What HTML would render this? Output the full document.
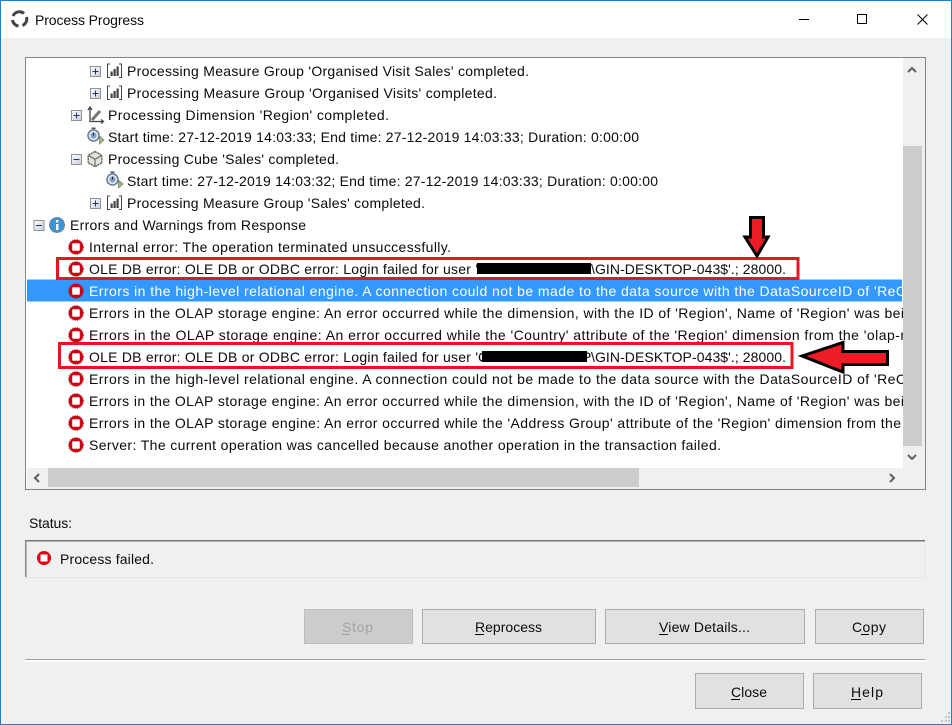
<!DOCTYPE html>
<html><head><meta charset="utf-8"><title>Process Progress</title>
<style>
html,body{margin:0;padding:0;width:952px;height:725px;overflow:hidden;background:#f0f0f0}
svg{display:block}
text{font-family:"Liberation Sans",sans-serif;font-size:14px;fill:#0a0a0a}
.s{fill:#fff}
.d{fill:#a3a3a3}
</style></head><body>
<svg width="952" height="725" viewBox="0 0 952 725" xmlns="http://www.w3.org/2000/svg">
<defs>
<clipPath id="lc"><rect x="27" y="58" width="876" height="410"/></clipPath>
<linearGradient id="bx" x1="0" y1="0" x2="1" y2="1"><stop offset="0" stop-color="#fff"/><stop offset="1" stop-color="#c9cdd6"/></linearGradient>
<g id="plus"><rect x=".5" y=".5" width="10" height="10" fill="url(#bx)" stroke="#8f9296"/><path d="M2.5 5.5h6M5.5 2.500v6" stroke="#25357a" stroke-width="1" fill="none"/></g>
<g id="minus"><rect x=".5" y=".5" width="10" height="10" fill="url(#bx)" stroke="#8f9296"/><path d="M2.500 5.500h6" stroke="#25357a" stroke-width="1" fill="none"/></g>
<g id="bars"><path d="M3 .5H.5V14H3M12 .5H14.500V14H12" fill="none" stroke="#444" stroke-width="1"/><rect x="3.500" y="8" width="2.200" height="4.500" fill="#444"/><rect x="6.500" y="5.500" width="2.200" height="7" fill="#444"/><rect x="9.500" y="3" width="2.200" height="9.500" fill="#444"/></g>
<g id="err"><circle cx="0" cy="0" r="7.800" fill="none" stroke="#555" stroke-width=".7" stroke-dasharray="1 1.500"/><circle cx="0" cy="0" r="7.300" fill="#cc0011"/><rect x="-3.800" y="-3.800" width="7.600" height="7.600" rx="1" fill="#fff"/></g>
<g id="watch"><circle cx="6.500" cy="8.500" r="5.600" fill="#dbe6f3" stroke="#5b6b80" stroke-width="1.300"/><circle cx="6.500" cy="8.500" r="3" fill="#7fa3d0"/><path d="M6.500 8.500V5.500" stroke="#223" stroke-width="1"/><rect x="4.500" y="0.500" width="4" height="1.600" fill="#555"/><path d="M12.500 9l4.500 4-4.500 4z" fill="#9db58a" stroke="#6c7f60" stroke-width=".7"/></g>
</defs>

<!-- window -->
<rect x="0" y="0" width="952" height="725" fill="#1b80d0"/>
<rect x="1" y="1" width="950" height="723" fill="#f0f0f0"/>
<rect x="1" y="1" width="950" height="37" fill="#fff"/>

<!-- title -->
<g fill="none" stroke="#444" stroke-width="3">
<path d="M13 16A7 7 0 0 1 24 13.500"/>
<path d="M26.500 17A7 7 0 0 1 22.500 25.500"/>
<path d="M18.500 26A7 7 0 0 1 12.500 20"/>
</g>
<text x="35" y="25" textLength="109" lengthAdjust="spacing">Process Progress</text>
<rect x="799" y="19" width="10" height="1" fill="#000"/>
<rect x="857.500" y="14.500" width="9" height="9" fill="none" stroke="#000"/>
<path d="M917.500 14.500l10 10M927.500 14.500l-10 10" stroke="#000" fill="none"/>

<!-- list box -->
<rect x="25.500" y="57.500" width="900" height="432" fill="#fff" stroke="#82878c"/>
<rect x="903" y="58" width="20" height="410" fill="#f0f0f0"/>
<rect x="903" y="146" width="19" height="300" fill="#cdcdcd"/>
<rect x="27" y="468" width="896" height="19" fill="#f0f0f0"/>
<rect x="48" y="468" width="591" height="19" fill="#cdcdcd"/>
<rect x="923" y="58" width="2" height="431" fill="#f0f0f0"/>
<rect x="26" y="487" width="899" height="2" fill="#f0f0f0"/>
<g fill="none" stroke="#606060" stroke-width="2">
<path d="M908 72l4-4 4 4"/>
<path d="M908 455l4 4 4-4"/>
<path d="M39 474l-4 4 4 4"/>
<path d="M890 474l4 4-4 4"/>
</g>

<rect x="27" y="279.500" width="875" height="22" fill="#3399ff"/>

<!-- tree icons -->
<use href="#plus" x="90" y="66"/>
<use href="#bars" x="107" y="63.500"/>
<use href="#plus" x="90" y="88"/>
<use href="#bars" x="107" y="85.500"/>
<use href="#plus" x="71" y="110"/>
<g fill="none" stroke="#444" stroke-width="1.300">
<path d="M90 108V121.500H103"/>
<path d="M92 120l8-9" stroke-width="3" stroke="#777"/>
<path d="M88 110l2-3 2 3M101 119.500l2.500 2-2.500 2"/>
</g>
<use href="#watch" x="87" y="127"/>
<use href="#minus" x="71" y="154"/>
<g fill="none" stroke="#555" stroke-width="1.300">
<path d="M95 151.500l6.800 3.800v7.600L95 166.700l-6.800-3.800v-7.600z" fill="#e4e4de" stroke-dasharray="2 .6"/>
<path d="M88.500 155.500l6.500 3.700 6.500-3.700M95 159.200v7" stroke="#777"/>
</g>
<use href="#watch" x="106" y="171"/>
<use href="#plus" x="90" y="198"/>
<use href="#bars" x="107" y="195.500"/>
<use href="#minus" x="33.500" y="220"/>
<circle cx="57" cy="225" r="7.600" fill="#3d94d2" stroke="#333" stroke-width=".6" stroke-dasharray="1 1"/>
<rect x="56" y="224" width="2.400" height="6" fill="#fff"/>
<rect x="56" y="220" width="2.400" height="2.400" fill="#fff"/>

<use href="#err" x="76" y="247"/>
<use href="#err" x="76" y="269"/>
<use href="#err" x="76" y="291"/>
<use href="#err" x="76" y="313"/>
<use href="#err" x="76" y="335"/>
<use href="#err" x="76" y="357"/>
<use href="#err" x="76" y="379"/>
<use href="#err" x="76" y="401"/>
<use href="#err" x="76" y="423"/>
<use href="#err" x="76" y="445"/>

<!-- tree text -->
<g clip-path="url(#lc)">
<text x="127" y="76" textLength="402" lengthAdjust="spacing">Processing Measure Group 'Organised Visit Sales' completed.</text>
<text x="127" y="98" textLength="370" lengthAdjust="spacing">Processing Measure Group 'Organised Visits' completed.</text>
<text x="108" y="120" textLength="281" lengthAdjust="spacing">Processing Dimension 'Region' completed.</text>
<text x="108" y="142" textLength="531" lengthAdjust="spacing">Start time: 27-12-2019 14:03:33; End time: 27-12-2019 14:03:33; Duration: 0:00:00</text>
<text x="108" y="164" textLength="231" lengthAdjust="spacing">Processing Cube 'Sales' completed.</text>
<text x="127" y="186" textLength="531" lengthAdjust="spacing">Start time: 27-12-2019 14:03:32; End time: 27-12-2019 14:03:33; Duration: 0:00:00</text>
<text x="127" y="208" textLength="298" lengthAdjust="spacing">Processing Measure Group 'Sales' completed.</text>
<text x="70" y="230" textLength="236" lengthAdjust="spacing">Errors and Warnings from Response</text>
<text x="89" y="252" textLength="362" lengthAdjust="spacing">Internal error: The operation terminated unsuccessfully.</text>
<text x="89" y="274" textLength="389" lengthAdjust="spacing">OLE DB error: OLE DB or ODBC error: Login failed for user '</text>
<text x="591" y="274" textLength="195" lengthAdjust="spacing">\GIN-DESKTOP-043$'.; 28000.</text>
<text class="s" x="89" y="296" textLength="817" lengthAdjust="spacing">Errors in the high-level relational engine. A connection could not be made to the data source with the DataSourceID of 'ReC</text>
<text x="89" y="318" textLength="815" lengthAdjust="spacing">Errors in the OLAP storage engine: An error occurred while the dimension, with the ID of 'Region', Name of 'Region' was bei</text>
<text x="89" y="340" textLength="816" lengthAdjust="spacing">Errors in the OLAP storage engine: An error occurred while the 'Country' attribute of the 'Region' dimension from the 'olap-r</text>
<text x="89" y="362" textLength="389" lengthAdjust="spacing">OLE DB error: OLE DB or ODBC error: Login failed for user '</text>
<text x="478" y="362">C</text>
<text x="582" y="362">P</text>
<text x="591" y="362" textLength="195" lengthAdjust="spacing">\GIN-DESKTOP-043$'.; 28000.</text>
<text x="89" y="384" textLength="817" lengthAdjust="spacing">Errors in the high-level relational engine. A connection could not be made to the data source with the DataSourceID of 'ReC</text>
<text x="89" y="406" textLength="815" lengthAdjust="spacing">Errors in the OLAP storage engine: An error occurred while the dimension, with the ID of 'Region', Name of 'Region' was bei</text>
<text x="89" y="428" textLength="812" lengthAdjust="spacing">Errors in the OLAP storage engine: An error occurred while the 'Address Group' attribute of the 'Region' dimension from the</text>
<text x="89" y="450" textLength="632" lengthAdjust="spacing">Server: The current operation was cancelled because another operation in the transaction failed.</text>
</g>

<!-- annotations -->
<rect x="477" y="263" width="114" height="11" fill="#000"/>
<rect x="482" y="351" width="105" height="11" fill="#000"/>
<rect x="57.500" y="258.500" width="740.500" height="20" fill="none" stroke="#e8141f" stroke-width="3"/>
<rect x="59.500" y="343.500" width="732.500" height="24" fill="none" stroke="#e8141f" stroke-width="3"/>
<path d="M750.500 217.500H763.500V237H768L757 256L745 237H750.500Z" fill="#ed1c24" stroke="#000" stroke-width="3"/>
<path d="M802 356L843 342.500V351.500H887.500V364.500H843V372Z" fill="#ed1c24" stroke="#000" stroke-width="3"/>

<!-- status -->
<text x="29" y="528" textLength="43" lengthAdjust="spacing">Status:</text>
<rect x="25" y="540" width="900" height="38" fill="#e4e4e4"/>
<rect x="27" y="542" width="897" height="35" fill="#f0f0f0"/>
<rect x="25" y="540" width="900" height="1.500" fill="#7a7a7a"/>
<rect x="25" y="540" width="1.500" height="37" fill="#8a8a8a"/>
<circle cx="44" cy="558" r="7" fill="#e60012"/>
<rect x="40.500" y="554.500" width="7" height="7" fill="#fff"/>
<text x="60" y="564" textLength="94" lengthAdjust="spacing">Process failed.</text>

<!-- buttons -->
<rect x="304.500" y="609.500" width="108" height="34" fill="#cccccc" stroke="#bfbfbf"/>
<text class="d" x="342" y="632" textLength="31" lengthAdjust="spacing">Stop</text>
<rect x="342" y="634" width="8" height="1" fill="#a3a3a3"/>

<rect x="422.500" y="609.500" width="173" height="34" fill="#e1e1e1" stroke="#adadad"/>
<text x="475" y="632" textLength="67" lengthAdjust="spacing">Reprocess</text>
<rect x="475" y="634" width="9" height="1" fill="#000"/>

<rect x="605.500" y="609.500" width="199" height="34" fill="#e1e1e1" stroke="#adadad"/>
<text x="659" y="632" textLength="91" lengthAdjust="spacing">View Details...</text>
<rect x="659" y="634" width="9" height="1" fill="#000"/>

<rect x="815.500" y="609.500" width="108" height="34" fill="#e1e1e1" stroke="#adadad"/>
<text x="852" y="632" textLength="34" lengthAdjust="spacing">Copy</text>
<rect x="861" y="634" width="8" height="1" fill="#000"/>

<rect x="25" y="659" width="900" height="1" fill="#a0a0a0"/>
<rect x="25" y="660" width="900" height="2" fill="#fff"/>

<rect x="695.500" y="673.500" width="108" height="35" fill="#e1e1e1" stroke="#adadad"/>
<text x="731" y="697" textLength="36" lengthAdjust="spacing">Close</text>
<rect x="731" y="699" width="9" height="1" fill="#000"/>

<rect x="813.500" y="673.500" width="108" height="35" fill="#e1e1e1" stroke="#adadad"/>
<text x="851" y="697" textLength="32" lengthAdjust="spacing">Help</text>
<rect x="851" y="699" width="10" height="1" fill="#000"/>

<!-- grip -->
<g fill="#c4c4c4"><rect x="948" y="712" width="2" height="2"/><rect x="945" y="716" width="2" height="2"/><rect x="948" y="716" width="2" height="2"/><rect x="941" y="720" width="2" height="2"/><rect x="945" y="720" width="2" height="2"/><rect x="948" y="720" width="2" height="2"/></g>
</svg>
</body></html>
